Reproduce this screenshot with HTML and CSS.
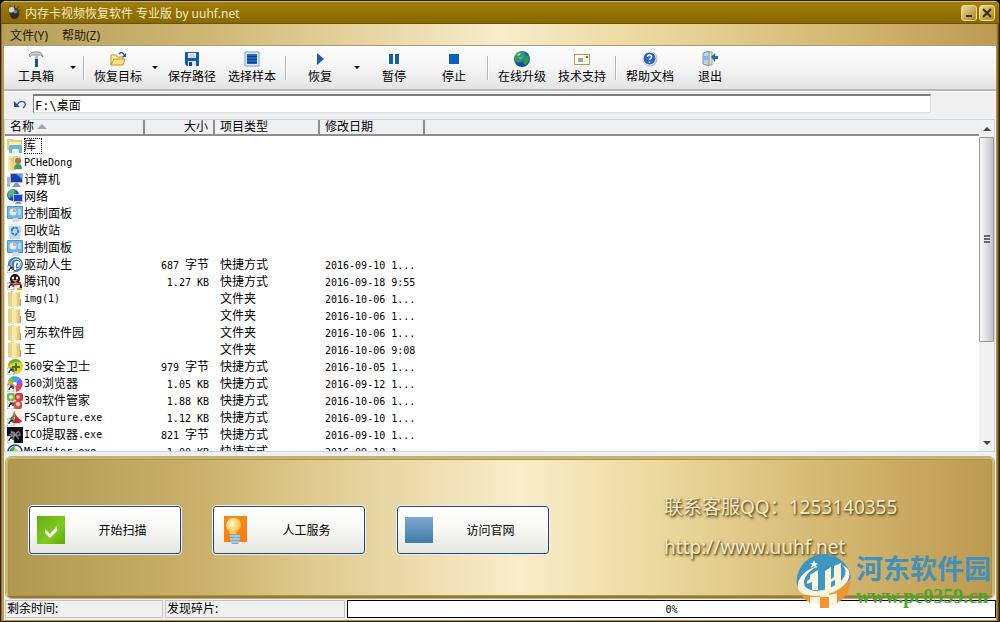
FILE: index.html
```html
<!DOCTYPE html>
<html lang="zh-CN">
  <head>
    <meta charset="UTF-8">
    <title>内存卡视频恢复软件 专业版 by uuhf.net</title>
    <link rel="stylesheet" href="styles.css">
  </head>
  <body>
    <!-- icons -->
    <svg class="sprite" aria-hidden="true">
      <defs>
        <linearGradient id="gold" x1="0" x2="1"><stop offset="0" stop-color="#f8eba6"/><stop offset="1" stop-color="#d9bd5f"/></linearGradient>
        <linearGradient id="blue" x1="0" y1="0" x2="0" y2="1"><stop offset="0" stop-color="#7fa9d0"/><stop offset="1" stop-color="#3d7aa6"/></linearGradient>
        <linearGradient id="green" x1="0" x2="1" y2="1"><stop offset="0" stop-color="#62ae1b"/><stop offset=".6" stop-color="#7fcb1c"/><stop offset="1" stop-color="#5aa70c"/></linearGradient>
        <radialGradient id="globe" cx=".35" cy=".3"><stop offset="0" stop-color="#7fc4f2"/><stop offset="1" stop-color="#0c4f9e"/></radialGradient>
        <radialGradient id="bulb" cx=".4" cy=".35"><stop offset="0" stop-color="#fffbe0"/><stop offset="1" stop-color="#ffc24c"/></radialGradient>
        <linearGradient id="orange" x1="0" y1="0" x2="0" y2="1"><stop offset="0" stop-color="#f08a1c"/><stop offset="1" stop-color="#ff7b0a"/></linearGradient>
      </defs>
      <symbol id="i-folder" viewBox="0 0 16 16">
        <path d="M1 1l6-1v16l-6-1z" fill="#e9d27e"/><path d="M5 1h5v14H5z" fill="#f6eab0"/><path d="M8 2l5-1v14l-5 1z" fill="url(#gold)"/><path d="M13.500 8v7" stroke="#b7a258"/>
      </symbol>
      <symbol id="i-library" viewBox="0 0 16 16">
        <path d="M0 1h6l1 1h8v10H0z" fill="#e8cf72"/><path d="M2 4h12v3H2z" fill="#f8efb9"/><path d="M2 15V9q0-2 2-2h9q2 0 2 2v6h-3v-4H5v4z" fill="#6bb6df"/><path d="M6 11h5v4H6z" fill="#e3f4fb"/>
      </symbol>
      <symbol id="i-user" viewBox="0 0 16 16">
        <path d="M1 1l8 1v13l-8 1z" fill="url(#gold)"/><path d="M7 1h7v14H7z" fill="#ecd98c"/><circle cx="11" cy="6" r="3" fill="#9b7956"/><path d="M7 14q0-5 4-5t4 5z" fill="#4b9574"/>
      </symbol>
      <symbol id="i-computer" viewBox="0 0 16 16">
        <path d="M0 5h3v10H0z" fill="#adb6bf"/><path d="M3 1h13v10H3z" fill="#b5bdc8"/><path d="M4 2h11v8H4z" fill="#1740b4"/><path d="M9 2h6v5z" fill="#6a95ee"/><path d="M8 11h3l3 4H5z" fill="#8d98a5"/>
      </symbol>
      <symbol id="i-network" viewBox="0 0 16 16">
        <circle cx="6" cy="6" r="6" fill="url(#globe)"/><path d="M2 3q3-4 6-1l-2 3-3 1 1 3-3-1zM7 7l3 1-3 3z" fill="#52c263"/><path d="M6 5h10v8H6z" fill="#b9c2d4"/><path d="M7 6h8v6H7z" fill="#1848c2"/><path d="M9 13h4l2 2H8z" fill="#8792a4"/>
      </symbol>
      <symbol id="i-panel" viewBox="0 0 16 16">
        <rect width="16" height="13" rx="1" fill="#4f94c9"/><path d="M1 1h14v11H1z" fill="#76b6e2"/><circle cx="6" cy="6" r="3.500" fill="#dceefb"/><path d="M6 6V3a3 3 0 0 1 3 3z" fill="#f3a83b"/><path d="M11 4h3M11 6h3M11 8h3" stroke="#e9f6ff"/><path d="M6 12h5l2 4H5z" fill="#d5dde3"/>
      </symbol>
      <symbol id="i-bin" viewBox="0 0 16 16">
        <path d="M1 0h14l-2 16H3z" fill="#bedbee"/><path d="M1 0h14v3H1z" fill="#e6f3fa"/><path d="M5 6l3-2 3 2v4l-3 2-3-2z" fill="none" stroke="#3f7fc8" stroke-width="2" stroke-dasharray="3 1"/>
      </symbol>
      <symbol id="i-link" viewBox="0 0 16 16">
        <path d="M0 9h7v7H0z" fill="#fff" stroke="#666" stroke-width=".5"/><path d="M2 14q0-3 3-3M3 10h3v3" fill="none" stroke="#111" stroke-width="1.200"/>
      </symbol>
      <symbol id="i-driver" viewBox="0 0 16 16">
        <circle cx="8.500" cy="7.500" r="7.500" fill="#3e7ab7"/><circle cx="9" cy="7" r="5" fill="none" stroke="#dcecf8"/><path d="M8 13V7a2 2 0 1 1 2 2" fill="none" stroke="#fff" stroke-width="2"/><use href="#i-link"/>
      </symbol>
      <symbol id="i-qq" viewBox="0 0 16 16">
        <ellipse cx="8" cy="5" rx="5" ry="5" fill="#15120f"/><path d="M1 14q0-7 7-7t7 7z" fill="#211"/><ellipse cx="9" cy="12" rx="4" ry="3.500" fill="#fff"/><ellipse cx="6" cy="4" rx="1.200" ry="1.500" fill="#fff"/><ellipse cx="10" cy="4" rx="1.200" ry="1.500" fill="#fff"/><path d="M5 6h6l-3 2z" fill="#f8a91c"/><path d="M2 8q6 3 12 0v2q-6 3-12 0z" fill="#d91e1e"/><path d="M10 14h5v2h-5z" fill="#f6a515"/><use href="#i-link"/>
      </symbol>
      <symbol id="i-guard" viewBox="0 0 16 16">
        <circle cx="8.500" cy="7.500" r="7.500" fill="#f2ca17"/><path d="M1 7a7.500 7.500 0 0 1 14-3q-8-3-14 3z" fill="#5cb431"/><path d="M8 4h2v3h3v2h-3v3H8V9H5V7h3z" fill="#178136"/><use href="#i-link"/>
      </symbol>
      <symbol id="i-browser" viewBox="0 0 16 16">
        <path d="M8 8L1 5a8 8 0 0 1 6-5z" fill="#60c840"/><path d="M8 8L5 1q5-2 8 1z" fill="#38a7f2"/><path d="M8 8l5-6q4 4 2 9z" fill="#8c4ff0"/><path d="M8 8l7 2q-1 5-6 6z" fill="#f04444"/><path d="M8 8L1 5q-2 7 4 10z" fill="#ff9a21"/><circle cx="8" cy="8" r="2" fill="#fff"/><use href="#i-link"/>
      </symbol>
      <symbol id="i-manager" viewBox="0 0 16 16">
        <rect x="0" width="8" height="8" rx="2" fill="#79b94b"/><rect x="8" width="8" height="8" rx="2" fill="#d83a3a"/><rect x="7" y="8" width="8" height="8" rx="2" fill="#e34a4a"/><circle cx="4" cy="4" r="2" fill="#dcf0c8"/><circle cx="11" cy="4" r="2" fill="#f2a6a6"/><circle cx="11" cy="11" r="2" fill="#fbd9d9"/><use href="#i-link"/>
      </symbol>
      <symbol id="i-capture" viewBox="0 0 16 16">
        <path d="M1 1h14v14H1z" fill="#f3efe9"/><path d="M7 0q0 6-6 10l4 1q4-4 2-11z" fill="#31a03c"/><path d="M7 1q2 6 8 10-2 3-9 2 3-5 1-12z" fill="#d32121"/><use href="#i-link"/>
      </symbol>
      <symbol id="i-ico" viewBox="0 0 16 16">
        <path d="M0 0h16v16H0z" fill="#101014"/><path d="M2 8h12M4 4l8 8M12 4l-8 8" stroke="#777e8b" stroke-width="1.200"/><circle cx="6" cy="7" r="2" fill="none" stroke="#aaa"/><circle cx="11" cy="7" r="2" fill="none" stroke="#888"/><use href="#i-link"/>
      </symbol>
      <symbol id="i-editor" viewBox="0 0 16 16">
        <circle cx="8" cy="8" r="7" fill="#fff" stroke="#2838a8" stroke-width="1.500"/><path d="M2 8q1-5 6-6l-1 8z" fill="#46ad3a"/><path d="M8 4l5 4H8z" fill="#efc518"/>
      </symbol>
    </svg>

    <div class="window">
      <header class="titlebar">
        <svg class="app-icon" viewBox="0 0 16 16"><ellipse cx="8" cy="9" rx="5" ry="6" fill="#2d2b26"/><path d="M1 3l4 3M3 0l3 5M8 0v4M13 1l-3 4M15 5l-4 2M14 10l-3-1M2 10l3-1" stroke="#47413a"/><circle cx="5" cy="5" r="3" fill="#ccd4d9"/><circle cx="9" cy="7" r="2" fill="#78838c"/></svg>
        <h1>内存卡视频恢复软件 专业版 by uuhf.net</h1>
        <button class="win-btn" aria-label="最小化"><svg viewBox="0 0 12 12"><path d="M3 9h6" stroke="#3b2a00" stroke-width="2"/></svg></button>
        <button class="win-btn" aria-label="关闭"><svg viewBox="0 0 12 12"><path d="M2 2l8 8M10 2l-8 8" stroke="#3b2a00" stroke-width="2"/></svg></button>
      </header>

      <nav class="menu">
        <button>文件(Y)</button>
        <button>帮助(Z)</button>
      </nav>

      <div class="toolbar">
        <button class="tool"><svg viewBox="0 0 16 16"><path d="M1 4q2-3 5-3h5q3 0 4 5-2-3-5-2H6Q3 3 2 6z" fill="#d5d8d9" stroke="#777" stroke-width=".8"/><path d="M7 4h3v5H7z" fill="#b8bcc0"/><path d="M7 8h3v8H7z" fill="#1d5590"/></svg>工具箱</button>
        <button class="drop" aria-label="工具箱选项"></button>
        <span class="sep"></span>
        <button class="tool"><svg viewBox="0 0 16 16"><path d="M1 14V4h5l1 2h6v3" fill="#fff1a8" stroke="#c29124"/><path d="M1 14l3-6h11l-2 6z" fill="#ffe389" stroke="#c29124"/><path d="M9 3q3-3 5 1" fill="none" stroke="#1756a8" stroke-width="1.300"/><path d="M16 2v4h-4z" fill="#1756a8"/></svg>恢复目标</button>
        <button class="drop" aria-label="恢复目标选项"></button>
        <button class="tool"><svg viewBox="0 0 16 16"><path d="M1 1h14v14H3l-2-2z" fill="#1758b5"/><path d="M4 2h8v5H4z" fill="#fff"/><path d="M5 4h6M5 6h6" stroke="#8aabd5"/><path d="M4 10h8v5H4z" fill="#dce8f6"/><path d="M5 11h3v4H5z" fill="#123f85"/></svg>保存路径</button>
        <button class="tool"><svg viewBox="0 0 16 16"><path d="M1 1h14v14H1z" fill="#e3efff" stroke="#6f9bd4"/><path d="M3 3h10v10H3z" fill="#2166bf"/><path d="M3 5.500h10M3 8.500h10M3 11.500h10" stroke="#0b3f8c"/></svg>选择样本</button>
        <span class="sep"></span>
        <button class="tool"><svg viewBox="0 0 16 16"><path d="M5 2l7 6-7 6z" fill="#125bb8"/></svg>恢复</button>
        <button class="drop" aria-label="恢复选项"></button>
        <button class="tool"><svg viewBox="0 0 16 16"><path d="M3 3h4v10H3zM9 3h4v10H9z" fill="#125bb8"/></svg>暂停</button>
        <button class="tool"><svg viewBox="0 0 16 16"><path d="M3 3h10v10H3z" fill="#0d5fc4"/></svg>停止</button>
        <span class="sep"></span>
        <button class="tool"><svg viewBox="0 0 16 16"><circle cx="8" cy="8" r="8" fill="url(#globe)"/><path d="M1 6q2-5 7-5l2 2-3 3H4l2 3-2 3q-3-2-3-6zM9 7l5-3 2 4-4 6-3-2 1-3z" fill="#2ba13c"/><path d="M3 4l3-2 1 1-3 2z" fill="#b8efa5"/></svg>在线升级</button>
        <button class="tool"><svg viewBox="0 0 16 16"><path d="M.5 3.500h15v10H.5z" fill="#fffbe2" stroke="#a5976c"/><path d="M4 8h5M4 10h5" stroke="#24579f"/><path d="M12 5h2v2h-2z" fill="#c74b32"/></svg>技术支持</button>
        <span class="sep"></span>
        <button class="tool"><svg viewBox="0 0 16 16"><circle cx="8" cy="8" r="7.500" fill="#b3bac8"/><circle cx="7.500" cy="7.500" r="6.500" fill="#2e62c8" stroke="#edf2fc"/><path d="M5.500 6q0-2 2-2t2 2q0 1-1 1.500T7.500 9M7.500 10.500V12" fill="none" stroke="#fff" stroke-width="1.500"/></svg>帮助文档</button>
        <button class="tool"><svg viewBox="0 0 16 16"><path d="M5 1h5v13H5z" fill="#f5dfa2" stroke="#b89a55"/><path d="M1 2l6-2v15l-6-2z" fill="#bcd6ef" stroke="#5c83ab" stroke-width=".8"/><path d="M3 5v4M5 5v4" stroke="#6793c2"/><path d="M9 6l4-4v3h3v3h-3v3z" fill="#166bc9"/></svg>退出</button>
      </div>

      <div class="address">
        <button class="back" aria-label="返回上级"><svg viewBox="0 0 14 12"><path d="M4 7q3-5 7-3 3 3-1 6" fill="none" stroke="#2450a8" stroke-width="1.300"/><path d="M1 3v6h6z" fill="#2450a8"/></svg></button>
        <input type="text" aria-label="路径" value="F:\桌面">
      </div>

      <main class="files">
        <div class="list">
          <table>
            <colgroup><col class="c-name"><col class="c-size"><col class="c-type"><col class="c-date"><col></colgroup>
            <thead>
              <tr><th>名称 <span class="sort"></span></th><th class="num">大小</th><th>项目类型</th><th>修改日期</th><th class="rest"></th></tr>
            </thead>
            <tbody>
              <tr><td><svg><use href="#i-library"/></svg><span class="focus">库</span></td><td></td><td></td><td></td></tr>
              <tr><td><svg><use href="#i-user"/></svg><i>PCHeDong</i></td><td></td><td></td><td></td></tr>
              <tr><td><svg><use href="#i-computer"/></svg>计算机</td><td></td><td></td><td></td></tr>
              <tr><td><svg><use href="#i-network"/></svg>网络</td><td></td><td></td><td></td></tr>
              <tr><td><svg><use href="#i-panel"/></svg>控制面板</td><td></td><td></td><td></td></tr>
              <tr><td><svg><use href="#i-bin"/></svg>回收站</td><td></td><td></td><td></td></tr>
              <tr><td><svg><use href="#i-panel"/></svg>控制面板</td><td></td><td></td><td></td></tr>
              <tr><td><svg><use href="#i-driver"/></svg>驱动人生</td><td><i>687 </i>字节</td><td>快捷方式</td><td><i>2016-09-10 1...</i></td></tr>
              <tr><td><svg><use href="#i-qq"/></svg>腾讯<i>QQ</i></td><td><i>1.27 KB</i></td><td>快捷方式</td><td><i>2016-09-18 9:55</i></td></tr>
              <tr><td><svg><use href="#i-folder"/></svg><i>img(1)</i></td><td></td><td>文件夹</td><td><i>2016-10-06 1...</i></td></tr>
              <tr><td><svg><use href="#i-folder"/></svg>包</td><td></td><td>文件夹</td><td><i>2016-10-06 1...</i></td></tr>
              <tr><td><svg><use href="#i-folder"/></svg>河东软件园</td><td></td><td>文件夹</td><td><i>2016-10-06 1...</i></td></tr>
              <tr><td><svg><use href="#i-folder"/></svg>王</td><td></td><td>文件夹</td><td><i>2016-10-06 9:08</i></td></tr>
              <tr><td><svg><use href="#i-guard"/></svg><i>360</i>安全卫士</td><td><i>979 </i>字节</td><td>快捷方式</td><td><i>2016-10-05 1...</i></td></tr>
              <tr><td><svg><use href="#i-browser"/></svg><i>360</i>浏览器</td><td><i>1.05 KB</i></td><td>快捷方式</td><td><i>2016-09-12 1...</i></td></tr>
              <tr><td><svg><use href="#i-manager"/></svg><i>360</i>软件管家</td><td><i>1.88 KB</i></td><td>快捷方式</td><td><i>2016-10-06 1...</i></td></tr>
              <tr><td><svg><use href="#i-capture"/></svg><i>FSCapture.exe</i></td><td><i>1.12 KB</i></td><td>快捷方式</td><td><i>2016-09-10 1...</i></td></tr>
              <tr><td><svg><use href="#i-ico"/></svg><i>ICO</i>提取器<i>.exe</i></td><td><i>821 </i>字节</td><td>快捷方式</td><td><i>2016-09-10 1...</i></td></tr>
              <tr><td><svg><use href="#i-editor"/></svg><i>MyEditor.exe</i></td><td><i>1.00 KB</i></td><td>快捷方式</td><td><i>2016-09-10 1...</i></td></tr>
            </tbody>
          </table>
        </div>
        <div class="scrollbar">
          <button class="up" aria-label="向上滚动"></button>
          <div class="track"><div class="thumb"><span class="grip"></span></div></div>
          <button class="down" aria-label="向下滚动"></button>
        </div>
      </main>

      <section class="panel">
        <button class="action"><svg viewBox="0 0 28 28"><path d="M0 0h28v28H0z" fill="url(#green)"/><path d="M8 13l5 5 7-8v5l-7 7-5-5z" fill="#fff"/></svg><span>开始扫描</span></button>
        <button class="action"><svg viewBox="0 0 28 28"><path d="M3 0h23v26H3z" fill="url(#orange)"/><path d="M9 18q0-3-3-5-2-4 0-7 3-5 8-4 6 1 6 7 0 3-3 5-2 2-1 5z" fill="url(#bulb)"/><path d="M9 18h10v7l-2 3h-6l-2-3z" fill="#7fa6bd"/><path d="M9 20h10M9 23h10M10 26h8" stroke="#dcebf2"/></svg><span>人工服务</span></button>
        <button class="action"><svg viewBox="0 0 28 28"><path d="M0 1h28v26H0z" fill="url(#blue)"/></svg><span>访问官网</span></button>
        <div class="contact">
          <p>联系客服QQ：1253140355</p>
          <p><a href="http://www.uuhf.net">http://www.uuhf.net</a></p>
        </div>
      </section>

      <footer class="status">
        <div class="cell time">剩余时间:</div>
        <div class="cell found">发现碎片:</div>
        <div class="progress" role="progressbar" aria-label="进度" aria-valuenow="0"><i>0%</i></div>
      </footer>

      <div class="watermark">
        <svg viewBox="0 0 56 56">
          <path d="M1 33A27 27 0 0 1 55 24Q52 34 30 38T1 33z" fill="#3d96c4"/>
          <path d="M6 43Q34 44 55 27 54 43 41 50V42L33 44V55H24V45L14 46V50Q9 47 6 43z" fill="#f1952e"/>
          <path d="M24 46V40l9-1v5zM14 44h10v7q-5 1-10-1zM33 42l8-2v10q-4 3-8 3z" fill="#fbf4de"/>
          <path d="M24 44h9v11h-9z" fill="#f1952e"/>
          <path d="M22 13Q5 18 2 30-1 43 20 43 40 42 51 29 58 17 46 12 53 18 46 27 36 37 20 38 7 37 8 28 10 19 22 13z" fill="#fbf4de"/>
          <path d="M11 28l3-2v-4l8-5v20h-6v-8l-5 2zM29 18l6-4v22l-6 1zM35 26l3-2V13l7-3v20l-6 4v-7l-4 2z" fill="#fbf4de"/>
          <path d="M18 7l1 3h3l-2 2 1 3-3-2-3 2 1-3-2-2h3z" fill="#fff"/>
        </svg>
        <div>
          <div class="wm-name">河东软件园</div>
          <div class="wm-url">www.pc0359.cn</div>
        </div>
      </div>
    </div>
  </body>
</html>
```
FILE: styles.css
```css
* {
  box-sizing: border-box;
}
body {
  margin: 0;
  background: #000;
  color: #000;
  font-family: "Noto Sans", "Noto Sans CJK SC", sans-serif;
  font-size: 12px;
}
button {
  margin: 0;
  padding: 0;
  border: 0;
  background: none;
  color: inherit;
  font: inherit;
}
i {
  font-family: "DejaVu Sans Mono", monospace;
  font-size: 10px;
  font-style: normal;
  line-height: 10px;
  white-space: pre;
}
.sprite {
  position: absolute;
  width: 0;
  height: 0;
}
.window {
  position: relative;
  display: flex;
  flex-direction: column;
  height: 100vh;
  border: 1px solid #2b1d00;
  border-radius: 6px 6px 0 0;
  background: #f0f0f0;
  overflow: hidden;
}

/* title and menu */
.titlebar {
  display: flex;
  align-items: center;
  gap: 2px;
  height: 23px;
  padding: 0 4px 0 6px;
  border-top: 1px solid #cdb76a;
  border-bottom: 1px solid #6b5200;
  background: linear-gradient(#a08013, #957403 40%, #886900);
  color: #f4ebca;
}
.titlebar h1 {
  flex: 1;
  margin: 0;
  padding-left: 1px;
  font-size: 12px;
  font-weight: normal;
}
.app-icon {
  width: 15px;
  height: 15px;
}
.win-btn {
  display: flex;
  align-items: center;
  justify-content: center;
  width: 16px;
  height: 16px;
  border: 1px solid #f0dc90;
  border-radius: 3px;
  background: linear-gradient(135deg, #efdc96, #a98420);
}
.win-btn svg {
  width: 12px;
  height: 12px;
}
.menu {
  display: flex;
  gap: 14px;
  height: 22px;
  padding: 0 9px;
  border-bottom: 1px solid #a89c7c;
  background: linear-gradient(90deg, #b7a05b, #ceb572 20%, #dfcb90 31%, #f8eccb 50%, #ecd99f 64%, #d3b670 85%, #bd9951);
  color: #241a00;
}

/* toolbar */
.toolbar {
  display: flex;
  height: 45px;
  margin: 0 3px;
  padding: 0 2px;
  border-bottom: 2px solid #b8b8b8;
  background: linear-gradient(#fdfdfd, #f5f5f5 50%, #e3e3e3);
}
.tool {
  display: flex;
  flex-direction: column;
  align-items: center;
  gap: 1px;
  width: 60px;
  padding-top: 5px;
  line-height: 18px;
}
.tool svg {
  width: 16px;
  height: 16px;
}
.drop {
  width: 14px;
}
.drop::before {
  content: "";
  display: block;
  width: 0;
  margin: 0 auto;
  border: 3px solid transparent;
  border-top-color: #000;
  border-bottom: 0;
}
.sep {
  width: 2px;
  height: 24px;
  margin: 10px 3px;
  border-left: 1px solid #b5b5b5;
  border-right: 1px solid #fff;
}

/* address */
.address {
  display: flex;
  align-items: center;
  height: 28px;
  margin: 0 3px;
  padding: 0 65px 4px 7px;
  border-top: 1px solid #fff;
}
.back {
  width: 22px;
}
.back svg {
  display: block;
  width: 14px;
  height: 12px;
  margin-left: 2px;
}
.address input {
  flex: 1;
  min-width: 0;
  height: 19px;
  padding: 0 1px;
  border: 1px solid #ddd;
  border-top: 2px solid #7d7d7d;
  border-left: 1px solid #7d7d7d;
  background: #fff;
  font-family: "DejaVu Sans Mono", "Noto Sans CJK SC", monospace;
  font-size: 12px;
}

/* file list */
.files {
  flex: 1;
  display: flex;
  min-height: 0;
  margin: 0 4px 0 3px;
  border: 1px solid #c5d8ea;
  background: #fff;
}
.list {
  flex: 1;
  min-width: 0;
  overflow: hidden;
}
table {
  width: 100%;
  table-layout: fixed;
  border-collapse: separate;
  border-spacing: 0;
}
.c-name {
  width: 140px;
}
.c-size {
  width: 70px;
}
.c-type,
.c-date {
  width: 105px;
}
th {
  height: 16px;
  padding: 0 5px;
  border-right: 2px solid #8e8e8e;
  border-bottom: 2px solid #8e8e8e;
  background: #f0f0f0;
  font-weight: normal;
  line-height: 14px;
  text-align: left;
}
th.num {
  text-align: right;
}
th.rest {
  border-right: 0;
}
.sort {
  display: inline-block;
  border: 5px solid transparent;
  border-top: 0;
  border-bottom-color: #a5a5a5;
  vertical-align: 2px;
}
td {
  height: 17px;
  padding: 0 5px;
  line-height: 16px;
  white-space: nowrap;
}
tbody::before {
  content: "";
  display: block;
  height: 1px;
}
td:first-child {
  display: flex;
  align-items: center;
  padding: 0 2px;
}
td:nth-child(2) {
  padding-right: 6px;
  text-align: right;
}
td svg {
  flex: none;
  width: 16px;
  height: 16px;
  margin-right: 1px;
}
.focus {
  padding-right: 6px;
  outline: 1px dotted #000;
  outline-offset: -1px;
}
.scrollbar {
  display: flex;
  flex-direction: column;
  width: 15px;
  background: #f1f1f1;
}
.up,
.down {
  height: 17px;
}
.up::before,
.down::before {
  content: "";
  display: block;
  width: 0;
  margin: 0 auto;
  border: 4px solid transparent;
}
.up::before {
  border-top: 0;
  border-bottom-color: #444;
}
.down::before {
  border-bottom: 0;
  border-top-color: #444;
}
.track {
  flex: 1;
}
.thumb {
  display: flex;
  align-items: center;
  justify-content: center;
  height: 69%;
  border: 1px solid #999;
  border-radius: 1px;
  background: linear-gradient(90deg, #f6f6f6, #e3e3e5 45%, #c2c2c8);
}
.grip {
  width: 6px;
  height: 8px;
  background: repeating-linear-gradient(#666 0 2px, #eee 2px 3px);
}

/* bottom panel */
.panel {
  display: flex;
  align-items: center;
  gap: 32px;
  height: 141px;
  margin: 5px 5px 0 5px;
  padding: 4px 21px 0;
  border: 2px solid #cbb668;
  border-bottom-color: #947b2b;
  border-radius: 5px;
  outline: 1px solid #b9ae92;
  box-shadow: inset 0 0 0 1px #b09541;
  background: linear-gradient(90deg, #b09852, #cbb16c 20%, #dfca8f 31%, #f9edcb 52%, #ecd99f 66%, #d5b972 83%, #bd9951);
}
.action {
  display: flex;
  align-items: center;
  width: 152px;
  height: 48px;
  padding: 0 7px;
  border: 1px solid #214a78;
  border-radius: 3px;
  outline: 1px solid #e8eff0;
  background: linear-gradient(#fff, #f7f8f4 50%, #e5e6df);
}
.action svg {
  width: 28px;
  height: 28px;
}
.action span {
  flex: 1;
  padding-left: 7px;
}
.contact {
  margin-left: 83px;
  padding-bottom: 6px;
  color: #f7ebc8;
  font-size: 19px;
  line-height: 40px;
  text-shadow: 1px 1px 2px #55431a, 1px 2px 3px #8a7339;
  white-space: nowrap;
}
.contact p {
  margin: 0;
}
.contact a {
  color: inherit;
  text-decoration: none;
}

/* status bar */
.status {
  display: flex;
  gap: 2px;
  height: 23px;
  padding: 2px 3px 2px 4px;
  border-bottom: 1px solid #b29543;
}
.cell {
  padding-left: 1px;
  border: 1px solid #c4c4bb;
  line-height: 16px;
}
.time {
  width: 158px;
}
.found {
  width: 180px;
}
.progress {
  flex: 1;
  border: 1px solid #000;
  background: #fff;
  line-height: 16px;
  text-align: center;
}

/* frame edges over the content sides */
.window::before,
.window::after {
  content: "";
  position: absolute;
  top: 23px;
  bottom: 0;
  left: 0;
  width: 3px;
  background: linear-gradient(90deg, #7a5d0b, #c9ad5b 60%, #a9883a);
}
.window::after {
  right: 0;
  left: auto;
  background: linear-gradient(90deg, #c6a756, #9b6e22 50%, #4c2f03);
}
.watermark {
  position: absolute;
  right: 8px;
  bottom: 12px;
  display: flex;
  align-items: center;
  gap: 4px;
}
.watermark svg {
  width: 56px;
  height: 56px;
}
.wm-name {
  color: #4391bb;
  font-size: 27px;
  font-weight: bold;
  line-height: 30px;
}
.wm-url {
  color: #4aa52c;
  font-family: "Liberation Serif", serif;
  font-size: 20px;
  font-weight: bold;
  line-height: 24px;
}
```
